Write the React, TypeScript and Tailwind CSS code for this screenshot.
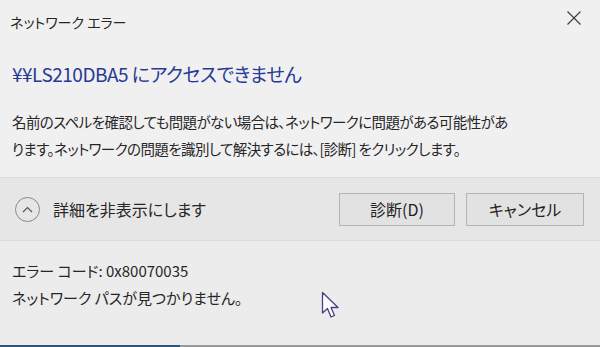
import React from 'react';

const font = "font-['Noto_Sans_CJK_JP','Noto_Sans',sans-serif] [font-feature-settings:'palt']";

const Cursor: React.FC = () => (
    <svg className="absolute left-[321px] top-[291px]" width="22" height="30" viewBox="0 0 22 30">
        <path
            d="M1.5 1.5 L1.5 22 L6.5 17.5 L10 26 L13.5 24.5 L10 16.5 L17 16.5 Z"
            fill="#ffffff"
            stroke="#4b3f86"
            strokeWidth="1.3"
            strokeLinejoin="round"
        />
    </svg>
);

const App: React.FC = () => {
    return (
        <div className={`relative w-[600px] h-[347px] flex flex-col bg-[#f1f0f1] text-[#262626] overflow-hidden ${font}`}>
            {/* title bar */}
            <div className="h-[44px] flex items-center justify-between pl-[10px] pr-[19px]">
                <span className="text-[14px] leading-none">ネットワーク エラー</span>
                <svg className="-mt-2" width="14" height="14" viewBox="0 0 14 14">
                    <path d="M0.5 0.5 L13.5 13.5 M13.5 0.5 L0.5 13.5" stroke="#3a3a3a" strokeWidth="1.1" />
                </svg>
            </div>

            <div className="px-[12px]">
                <h1 className="mt-[16px] text-[19px] leading-[28px] tracking-[-0.5px] font-normal text-[#273a94]">
                    ¥¥LS210DBA5 にアクセスできません
                </h1>
                <p className="mt-[20px] text-[14.5px] leading-[27px] tracking-[-0.6px]">
                    名前のスペルを確認しても問題がない場合は、ネットワークに問題がある可能性があ
                    <br />
                    ります。ネットワークの問題を識別して解決するには、[診断] をクリックします。
                </p>
            </div>

            {/* button band */}
            <div className="mt-[15px] h-[64px] flex items-center justify-between border-t border-b border-[#dcdcdc] bg-[#e6e6e6] pl-[15px] pr-[16px]">
                <div className="flex items-center gap-[13px]">
                    <div className="w-[25px] h-[25px] rounded-full border border-[#8a8a8a] flex items-center justify-center">
                        <svg width="11" height="7" viewBox="0 0 11 7">
                            <path d="M1 6 L5.5 1.5 L10 6" fill="none" stroke="#555" strokeWidth="1.2" />
                        </svg>
                    </div>
                    <span className="text-[16px]">詳細を非表示にします</span>
                </div>
                <div className="flex gap-[11px]">
                    <button className="w-[116px] h-[33px] border border-[#b4b4b4] bg-[#e2e2e2] text-[16px] text-[#222]">
                        診断(D)
                    </button>
                    <button className="w-[118px] h-[33px] border border-[#b4b4b4] bg-[#e2e2e2] text-[16px] text-[#222]">
                        キャンセル
                    </button>
                </div>
            </div>

            {/* details */}
            <div className="px-[12px] pt-[16px] text-[15px] leading-[27px] bg-[#ececec] flex-1">
                <div>エラー コード: 0x80070035</div>
                <div>ネットワーク パスが見つかりません。</div>
            </div>

            <div className="h-[2px] flex">
                <div className="w-[180px] bg-[#2f5576]" />
                <div className="flex-1 bg-[#9a9a9a]" />
            </div>

            <Cursor />
        </div>
    );
};

export default App;
